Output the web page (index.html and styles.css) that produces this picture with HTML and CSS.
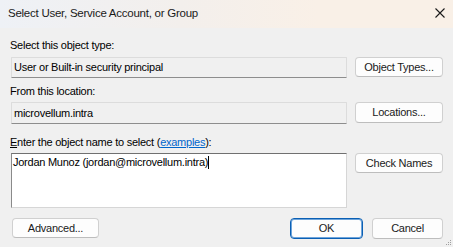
FILE: index.html
```html
<!DOCTYPE html>
<html>

<head>
    <meta charset="utf-8">
    <title>Select User, Service Account, or Group</title>
    <link rel="stylesheet" href="styles.css">
</head>

<body>
    <div class="dlg">
        <div class="dlg-title">
            <span class="dlg-caption">Select User, Service Account, or Group</span>
            <span class="dlg-close">
                <svg width="10" height="10" viewBox="0 0 10 10">
                    <path d="M0.5 0.5 L9.5 9.5 M9.5 0.5 L0.5 9.5" stroke="#1a1a1a" stroke-width="1.1" fill="none" />
                </svg>
            </span>
        </div>
        <div class="dlg-body">
            <div class="sec sec-type">
                <div class="lbl">Select this object type:</div>
                <div class="row">
                    <div class="field">User or Built-in security principal</div>
                    <div class="btn">Object Types...</div>
                </div>
            </div>
            <div class="sec sec-loc">
                <div class="lbl">From this location:</div>
                <div class="row">
                    <div class="field field-tall">microvellum.intra</div>
                    <div class="btn btn-tall">Locations...</div>
                </div>
            </div>
            <div class="sec sec-name">
                <div class="lbl"><u>E</u>nter the object name to select (<a href="#">examples</a>):</div>
                <div class="row">
                    <div class="edit">Jordan Munoz (jordan@microvellum.intra)<span class="caret"></span></div>
                    <div class="btn">Check Names</div>
                </div>
            </div>
            <div class="foot">
                <div class="btn btn-adv">Advanced...</div>
                <div class="foot-right">
                    <div class="btn btn-ok">OK</div>
                    <div class="btn btn-cancel">Cancel</div>
                </div>
            </div>
        </div>
        <svg class="grip" width="6" height="6" viewBox="0 0 6 6">
            <rect x="4" y="0" width="1" height="1" fill="#a0a0a0" />
            <rect x="2" y="2" width="1" height="1" fill="#a0a0a0" />
            <rect x="4" y="2" width="1" height="1" fill="#a0a0a0" />
            <rect x="0" y="4" width="1" height="1" fill="#a0a0a0" />
            <rect x="2" y="4" width="1" height="1" fill="#a0a0a0" />
            <rect x="4" y="4" width="1" height="1" fill="#a0a0a0" />
        </svg>
    </div>
</body>

</html>
```

FILE: styles.css
```css
html,
body {
    margin: 0;
    padding: 0;
    font-size: 11px;
    letter-spacing: -0.25px;
    font-family: "Liberation Sans", arial, sans-serif;
    color: #000;
    background: #f0f0f0;
}

.dlg {
    position: relative;
    width: 453px;
    height: 247px;
    overflow: hidden;
    background: #f0f0f0;
}

.dlg-title {
    height: 28px;
    display: flex;
    align-items: center;
    padding: 0 0 2px 8px;
    box-sizing: border-box;
    background: linear-gradient(90deg, #eef1f6 0%, #f3efec 40%, #f9f0e7 70%, #f9f0e7 100%);
}

.dlg-caption {
    flex: auto;
    color: #1a1a1a;
    font-size: 11.5px;
}

.dlg-close {
    width: 10px;
    height: 10px;
    margin-right: 8px;
    display: flex;
}

.dlg-body {
    padding: 0 10px 0 11px;
}

.lbl {
    line-height: 16px;
    margin-left: -1px;
}

.lbl a {
    color: #0066cc;
}

.sec-type {
    padding-top: 9px;
}

.sec-type .lbl {
    margin-bottom: 4px;
}

.sec-loc {
    padding-top: 5px;
}

.sec-loc .lbl {
    margin-bottom: 3px;
}

.sec-name {
    padding-top: 10px;
}

.sec-name .lbl {
    margin-bottom: 3px;
}

.row {
    display: grid;
    grid-template-columns: 1fr 88px;
    column-gap: 8px;
    align-items: start;
}

.field {
    height: 21px;
    line-height: 19px;
    padding: 0 2px;
    box-sizing: border-box;
    border: 1px solid #dcdcdc;
    border-bottom-color: #8d8d8d;
    border-radius: 1px;
    white-space: nowrap;
}

.field-tall {
    height: 22px;
    line-height: 20px;
}

.edit {
    height: 55px;
    box-sizing: border-box;
    padding: 2px 1px;
    line-height: 13px;
    background: #fff;
    border: 1px solid #d6d6d6;
    border-top-color: #707070;
    border-left-color: #8a8a8a;
    white-space: nowrap;
}

.caret {
    display: inline-block;
    width: 1px;
    height: 13px;
    background: #000;
    vertical-align: -3px;
}

.btn {
    height: 20px;
    line-height: 18px;
    box-sizing: border-box;
    text-align: center;
    background: #fdfdfd;
    border: 1px solid #d0d0d0;
    border-bottom-color: #bdbdbd;
    border-radius: 4px;
    color: #1a1a1a;
    cursor: default;
}

.btn-tall {
    height: 21px;
    line-height: 19px;
}

.foot {
    display: flex;
    justify-content: space-between;
    padding-top: 10px;
}

.foot-right {
    display: flex;
    gap: 9px;
}

.btn-adv {
    width: 87px;
    margin-left: 1px;
}

.btn-ok {
    width: 73px;
    height: 21px;
    line-height: 19px;
    border-color: #0a5fb4;
    box-shadow: inset 0 0 0 1px #6ea4da;
}

.btn-cancel {
    width: 71px;
    height: 21px;
    line-height: 19px;
}

.grip {
    position: absolute;
    right: 1px;
    bottom: 1px;
}
```
